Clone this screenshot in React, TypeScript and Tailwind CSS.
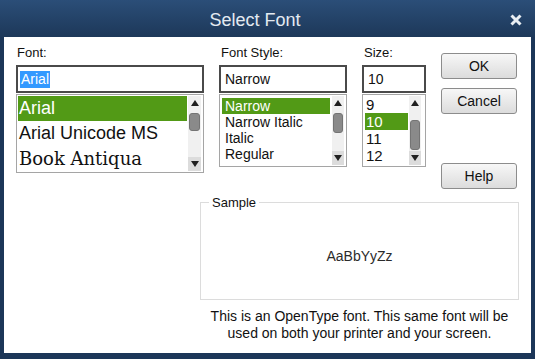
import React from 'react';

const GREEN = 'bg-[#529a16]';

interface ScrollbarProps {
  thumb: string;
  wrap: string;
}

const Scrollbar: React.FC<ScrollbarProps> = ({ thumb, wrap }) => {
  return (
    <div className={`flex flex-col bg-[#f0f0f0] ${wrap}`}>
      <div className="h-[14px] flex items-center justify-center">
        <svg width="8" height="6" viewBox="0 0 8 6">
          <path d="M4 0 L8 6 L0 6 Z" fill="#202020" />
        </svg>
      </div>
      <div className="flex-1 px-[1px]">
        <div className={`rounded-[3px] bg-[#8a8a8a] border border-[#747474] ${thumb}`}></div>
      </div>
      <div className="h-[14px] flex items-center justify-center bg-[#dcdcdc]">
        <svg width="8" height="6" viewBox="0 0 8 6">
          <path d="M0 0 L8 0 L4 6 Z" fill="#202020" />
        </svg>
      </div>
    </div>
  );
};

const Button: React.FC<{ label: string; className?: string }> = ({ label, className }) => {
  return (
    <div
      className={`h-[26px] flex items-center justify-center rounded-[3px] border border-[#8c8c8c] bg-gradient-to-b from-[#f7f7f7] to-[#dcdcdc] text-[14px] text-[#111] ${className ?? ''}`}
    >
      {label}
    </div>
  );
};

export default function App() {
  const fonts = [
    { name: 'Arial', cls: "font-['Liberation_Sans',Arial,sans-serif]" },
    { name: 'Arial Unicode MS', cls: "font-['Liberation_Sans',Arial,sans-serif]" },
    { name: 'Book Antiqua', cls: "font-['DejaVu_Serif',serif] text-[17px]" },
  ];
  const styles = ['Narrow', 'Narrow Italic', 'Italic', 'Regular'];
  const sizes = ['9', '10', '11', '12'];

  return (
    <div className="w-[535px] h-[359px] flex flex-col bg-[#1c3658] font-['Liberation_Sans',Arial,sans-serif] text-[#111]">
      {/* title bar */}
      <div className="h-[37px] flex items-center pt-[3px] bg-gradient-to-b from-[#2b4e78] to-[#1d3859]">
        <div className="flex-1 text-center text-[18px] text-[#e3eaf1]">Select Font</div>
        <div className="w-[25px]">
          <svg width="12" height="12" viewBox="0 0 12 12">
            <path d="M1.5 1.5 L10.5 10.5 M10.5 1.5 L1.5 10.5" stroke="#e9eef3" strokeWidth="3" />
          </svg>
        </div>
      </div>

      {/* body */}
      <div className="flex-1 mx-[4px] mb-[6px] bg-white pt-[8px] pl-[12px]">
        <div className="flex items-start">
          {/* Font */}
          <div className="w-[188px]">
            <div className="h-[16px] text-[13px] leading-[16px] pl-[1px]">Font:</div>
            <div className="mt-[4px] h-[28px] border-2 border-[#4a4a4a] flex items-center pl-[2px]">
              <span className="bg-[#3399ff] text-white text-[14px] leading-[17px] px-[1px]">Arial</span>
            </div>
            <div className="mt-[1px] h-[79px] border border-[#a5a5a5] flex">
              <div className="flex-1 p-[1px] overflow-hidden">
                {fonts.map((f, i) => (
                  <div
                    key={f.name}
                    className={`h-[25px] leading-[25px] text-[18px] pl-[1px] whitespace-nowrap ${f.cls} ${
                      i === 0 ? `${GREEN} text-white` : ''
                    }`}
                  >
                    {f.name}
                  </div>
                ))}
              </div>
              <Scrollbar wrap="w-[13px] my-[1px] mr-[2px]" thumb="mt-[3px] h-[18px]" />
            </div>
          </div>

          {/* Font Style */}
          <div className="w-[128px] ml-[15px]">
            <div className="h-[16px] text-[13px] leading-[16px] pl-[2px]">Font Style:</div>
            <div className="mt-[4px] h-[28px] border-2 border-[#4a4a4a] flex items-center pl-[4px] text-[14px]">
              Narrow
            </div>
            <div className="mt-[1px] h-[73px] border border-[#a5a5a5] flex">
              <div className="flex-1 pt-[3px] pl-[2px] pr-[2px] overflow-hidden">
                {styles.map((s, i) => (
                  <div
                    key={s}
                    className={`h-[16px] leading-[16px] text-[14px] pl-[3px] whitespace-nowrap ${
                      i === 0 ? `${GREEN} text-white` : ''
                    }`}
                  >
                    {s}
                  </div>
                ))}
              </div>
              <Scrollbar wrap="w-[12px] my-[1px] mr-[2px]" thumb="mt-[3px] h-[20px]" />
            </div>
          </div>

          {/* Size */}
          <div className="w-[64px] ml-[15px]">
            <div className="h-[16px] text-[13px] leading-[16px] pl-[2px]">Size:</div>
            <div className="mt-[4px] h-[28px] border-2 border-[#4a4a4a] flex items-center pl-[4px] text-[14px]">
              10
            </div>
            <div className="mt-[1px] h-[73px] border border-[#a5a5a5] flex">
              <div className="flex-1 pt-[1px] pl-[2px] overflow-hidden">
                {sizes.map((s, i) => (
                  <div
                    key={s}
                    className={`h-[17px] leading-[17px] text-[15px] pl-[1px] ${i === 1 ? `${GREEN} text-white` : ''}`}
                  >
                    {s}
                  </div>
                ))}
              </div>
              <Scrollbar wrap="w-[12px] my-[1px] mr-[4px] ml-[1px]" thumb="mt-[10px] h-[30px]" />
            </div>
          </div>

          {/* buttons */}
          <div className="w-[76px] ml-[15px] mt-[8px] flex flex-col">
            <Button label="OK" />
            <Button label="Cancel" className="mt-[9px]" />
            <Button label="Help" className="mt-[49px]" />
          </div>
        </div>

        {/* sample */}
        <div className="ml-[184px] w-[319px]">
          <div className="relative mt-[13px] h-[98px] border border-[#dcdcdc] flex items-center justify-center pt-[11px]">
            <span className="absolute -top-[8px] left-[8px] px-[3px] bg-white text-[13px] leading-[16px]">Sample</span>
            <span className="text-[14px] text-[#2b2b2b]">AaBbYyZz</span>
          </div>
          <div className="mt-[8px] text-center text-[14px] leading-[17px]">
            <div>This is an OpenType font. This same font will be</div>
            <div>used on both your printer and your screen.</div>
          </div>
        </div>
      </div>
    </div>
  );
}
